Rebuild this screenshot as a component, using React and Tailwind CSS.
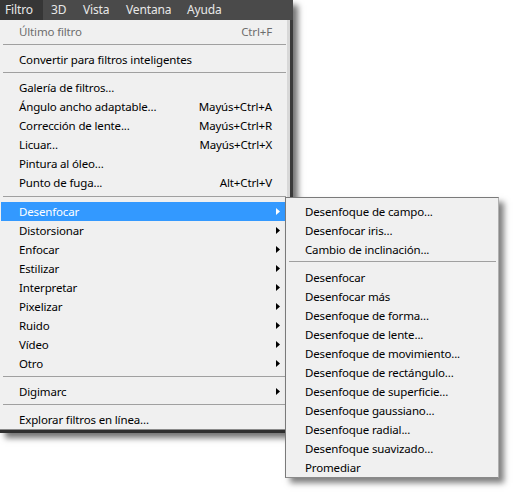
import React from "react";

const Arrow = ({ white }) => (
  <svg width="4" height="7" viewBox="0 0 4 7" className="absolute right-[6px] top-[6px]">
    <path d="M0 0 L4 3.5 L0 7 Z" fill={white ? "#ffffff" : "#000000"} />
  </svg>
);

const Sep = ({ sub }) => (
  <div className={sub ? "h-[9px] pt-[2px]" : "h-[9px] pt-[3px]"}>
    <div className={sub ? "h-px bg-[#a0a0a0] ml-[3px] mr-[2px]" : "h-px bg-[#a0a0a0] ml-[3px] mr-px"} />
  </div>
);

const Item = ({ label, shortcut, arrow, disabled, active }) => (
  <div
    className={
      "relative h-[19px] flex items-center pl-[18px] pr-[14px] leading-none " +
      (active ? "bg-[#3399ff] text-white ml-px mr-px" : disabled ? "text-[#6d6d6d] ml-px mr-px" : "text-black ml-px mr-px")
    }
  >
    <span className="flex-1 whitespace-nowrap">{label}</span>
    {shortcut && <span className="whitespace-nowrap">{shortcut}</span>}
    {arrow && <Arrow white={active} />}
  </div>
);

const SubItem = ({ label }) => (
  <div className="h-[19px] flex items-center pl-[19px] leading-none text-black whitespace-nowrap">{label}</div>
);

export default function App() {
  return (
    <div
      className="relative w-[514px] h-[493px] bg-white overflow-hidden text-[11.5px] tracking-[-0.15px]"
      style={{ fontFamily: '"Noto Sans", "Open Sans", sans-serif' }}
    >
      <div className="w-[293px] h-[433px] bg-[#2f2f2f] shadow-[5px_5px_6px_rgba(0,0,0,0.55)] flex flex-col">
        <div className="h-[20px] bg-[#4a4a4a] flex items-center text-[#e8e8e8] text-[12px]">
          <div className="h-full w-[43px] bg-[#363636] flex items-center pl-[5px]">Filtro</div>
          <div className="w-[32px] pl-[8px]">3D</div>
          <div className="w-[43px] pl-[8px]">Vista</div>
          <div className="w-[61px] pl-[8px]">Ventana</div>
          <div className="pl-[8px]">Ayuda</div>
        </div>
        <div className="flex flex-1">
          <div className="w-[287px] h-[410px] bg-[#f0f0f0] border-b border-[#8a8a8a] pt-[2px]">
            <Item label="Último filtro" shortcut="Ctrl+F" disabled />
            <Sep />
            <Item label="Convertir para filtros inteligentes" />
            <Sep />
            <Item label="Galería de filtros..." />
            <Item label="Ángulo ancho adaptable..." shortcut="Mayús+Ctrl+A" />
            <Item label="Corrección de lente..." shortcut="Mayús+Ctrl+R" />
            <Item label="Licuar..." shortcut="Mayús+Ctrl+X" />
            <Item label="Pintura al óleo..." />
            <Item label="Punto de fuga..." shortcut="Alt+Ctrl+V" />
            <div className="h-[10px] pt-[4px]"><div className="h-px bg-[#a0a0a0] ml-[3px] mr-px" /></div>
            <Item label="Desenfocar" arrow active />
            <Item label="Distorsionar" arrow />
            <Item label="Enfocar" arrow />
            <Item label="Estilizar" arrow />
            <Item label="Interpretar" arrow />
            <Item label="Pixelizar" arrow />
            <Item label="Ruido" arrow />
            <Item label="Vídeo" arrow />
            <Item label="Otro" arrow />
            <Sep />
            <Item label="Digimarc" arrow />
            <Sep />
            <Item label="Explorar filtros en línea..." />
          </div>
          <div className="w-[3px] bg-[#d8d8d8]" />
          <div className="w-[3px] bg-[#3a3a3a]" />
        </div>
      </div>

      <div className="absolute left-[285px] top-[197px] w-[214px] h-[281px] bg-[#f0f0f0] border border-[#7a7a7a] border-r-[#b0b0b0] border-b-[#8a8a8a] pt-[4px] shadow-[5px_5px_6px_rgba(0,0,0,0.5)]">
        <SubItem label="Desenfoque de campo..." />
        <SubItem label="Desenfocar iris..." />
        <SubItem label="Cambio de inclinación..." />
        <Sep sub />
        <SubItem label="Desenfocar" />
        <SubItem label="Desenfocar más" />
        <SubItem label="Desenfoque de forma..." />
        <SubItem label="Desenfoque de lente..." />
        <SubItem label="Desenfoque de movimiento..." />
        <SubItem label="Desenfoque de rectángulo..." />
        <SubItem label="Desenfoque de superficie..." />
        <SubItem label="Desenfoque gaussiano..." />
        <SubItem label="Desenfoque radial..." />
        <SubItem label="Desenfoque suavizado..." />
        <SubItem label="Promediar" />
      </div>
    </div>
  );
}
